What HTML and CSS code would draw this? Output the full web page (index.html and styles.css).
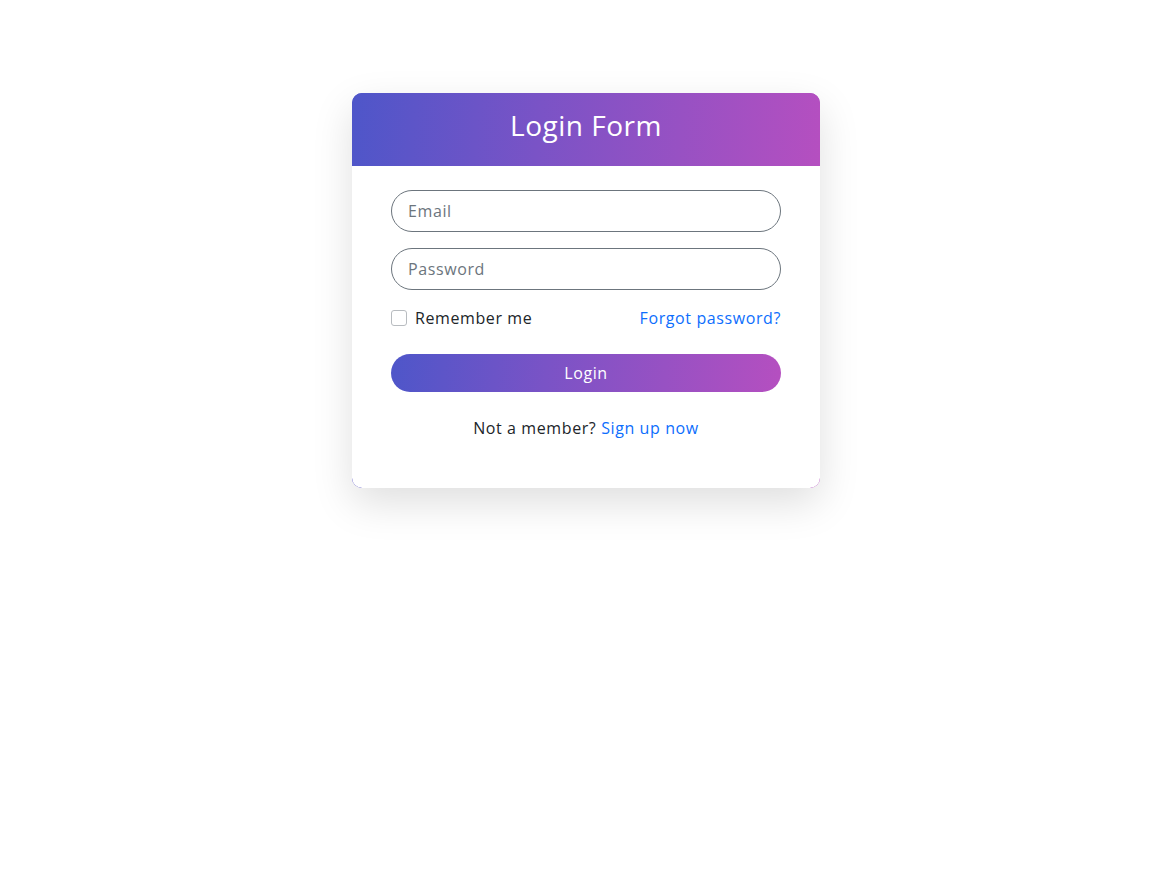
FILE: index.html
```html
<!DOCTYPE html>
<html lang="en">
<head>
<meta charset="utf-8">
<title>Login Form</title>
<link rel="stylesheet" href="styles.css">
</head>
<body>
<main class="page">
  <div class="card">
    <header class="card-header">
      <h1 class="title">Login Form</h1>
    </header>
    <form class="card-body">
      <input class="field" type="email" placeholder="Email">
      <input class="field" type="password" placeholder="Password">
      <div class="options">
        <label class="remember"><span class="check"></span>Remember me</label>
        <a class="link" href="#">Forgot password?</a>
      </div>
      <button class="btn" type="button">Login</button>
      <p class="signup">Not a member? <a class="link" href="#">Sign up now</a></p>
    </form>
  </div>
</main>
</body>
</html>
```

FILE: styles.css
```css
* { box-sizing: border-box; }
html, body { margin: 0; padding: 0; background: #fff; }
body {
  min-height: 100vh;
  font-family: "Open Sans", "Noto Sans", sans-serif;
  color: #212529;
  font-size: 16px;
  letter-spacing: 0.6px;
}
.page {
  display: flex;
  justify-content: center;
  align-items: flex-start;
  padding-top: 93px;
}
.card {
  width: 468px;
  border-radius: 10px;
  background: linear-gradient(100deg, #4e56c9, #b54fc0);
  box-shadow: 0 15px 40px rgba(0, 0, 0, 0.13);
  overflow: hidden;
}
.card-header {
  height: 73px;
  display: flex;
  justify-content: center;
  padding-top: 13px;
  background: linear-gradient(95deg, #4e56c9 0%, #7a53c6 40%, #b54fc0 100%);
}
.title {
  margin: 0;
  color: #fff;
  font-size: 28px;
  font-weight: 500;
  line-height: 38px;
  letter-spacing: 0.5px;
}
.card-body {
  background: #fff;
  border-radius: 0 0 10px 10px;
  padding: 24px 39px 48px;
  display: flex;
  flex-direction: column;
}
.field {
  height: 42px;
  border: 1px solid #6c757d;
  border-radius: 21px;
  padding: 0 16px;
  font: inherit;
  letter-spacing: 0.6px;
  color: #212529;
  margin-bottom: 16px;
  outline: none;
}
.field::placeholder { color: #6c757d; }
.options {
  display: flex;
  justify-content: space-between;
  align-items: center;
  height: 24px;
  margin-bottom: 24px;
}
.remember {
  display: flex;
  align-items: center;
  gap: 8px;
  color: #212529;
}
.check {
  width: 16px;
  height: 16px;
  border: 1px solid #b8bcc0;
  border-radius: 3px;
  background: #fff;
}
.link {
  color: #0d6efd;
  text-decoration: none;
}
.btn {
  height: 38px;
  border: none;
  border-radius: 19px;
  background: linear-gradient(95deg, #4e56c9 0%, #7a53c6 40%, #b54fc0 100%);
  color: #fff;
  font: inherit;
  letter-spacing: 0.6px;
  padding: 0;
}
.signup {
  margin: 24px 0 0;
  text-align: center;
  line-height: 24px;
}
```
